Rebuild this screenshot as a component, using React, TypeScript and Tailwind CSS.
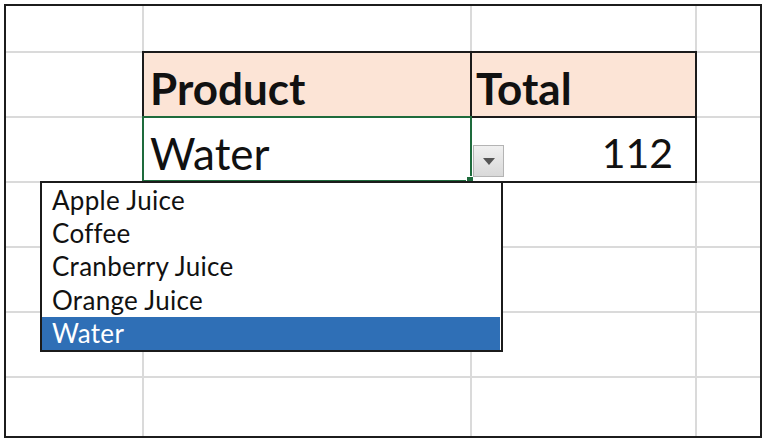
import React from 'react';

const items = ['Apple Juice', 'Coffee', 'Cranberry Juice', 'Orange Juice', 'Water'];

function GridCell({ lastCol, lastRow }: { lastCol: boolean; lastRow: boolean }) {
  return (
    <div
      className={`bg-white border-[#dadada] ${lastCol ? '' : 'border-r-2'} ${lastRow ? '' : 'border-b-2'}`}
    />
  );
}

export default function App() {
  const cells: React.ReactNode[] = [];
  for (let r = 0; r < 7; r++) {
    for (let c = 0; c < 4; c++) {
      // the table covers rows 2-3, columns 2-3
      if ((r === 1 || r === 2) && (c === 1 || c === 2)) continue;
      cells.push(<GridCell key={`${r}-${c}`} lastCol={c === 3} lastRow={r === 6} />);
    }
  }

  return (
    <div className="w-[768px] h-[445px] bg-white p-[4px] font-['Lato',sans-serif] text-[#111]">
      <div className="w-[758px] h-[434px] border-2 border-[#1c1c1c] grid grid-cols-[138px_328px_225px_63px] grid-rows-[47px_65px_65px_65px_65px_65px_58px]">
        {cells}

        <div className="col-start-2 col-span-2 row-start-2 row-span-2 -ml-[2px] -mt-[2px] border-2 border-[#1b1b1b] grid grid-cols-[328px_223px] grid-rows-[65px_63px]">
          <div className="bg-[#fce4d6] border-r-2 border-b-2 border-[#1b1b1b] flex items-center pl-[6px] pt-[6px] text-[44px] font-bold leading-none">
            Product
          </div>
          <div className="bg-[#fce4d6] border-b-2 border-[#1b1b1b] flex items-center pl-[4px] pt-[6px] text-[44px] font-bold leading-none">
            Total
          </div>

          <div className="relative border-r-2 border-[#1b1b1b] bg-white flex items-center pl-[6px] pt-[6px] text-[44px] leading-none">
            Water
            <div className="absolute -left-[2px] -top-[2px] -right-[2px] -bottom-[1px] border-2 border-[#1e6b3c] pointer-events-none" />
            <div className="absolute left-[322px] top-[58px] w-[8px] h-[8px] bg-[#1e6b3c] border border-white" />

            <div className="absolute left-[329px] top-[27px] w-[31px] h-[32px] border border-[#b4b4b4] bg-gradient-to-b from-[#f0f0f0] to-[#d9d9d9] flex items-center justify-center">
              <svg width="12" height="7" viewBox="0 0 12 7">
                <path d="M0 0 L12 0 L6 7 Z" fill="#555" />
              </svg>
            </div>

            <div className="absolute z-10 -left-[104px] top-[63px] w-[463px] h-[171px] bg-white border-2 border-[#1b1b1b] flex flex-col text-[26px] tracking-[0.3px] leading-none font-normal">
              {items.map((it) => (
                <div
                  key={it}
                  className={`h-[33.4px] flex items-center pl-[10px] ${
                    it === 'Water' ? 'bg-[#2f6fb6] text-white mr-[1px]' : 'text-[#111]'
                  }`}
                >
                  {it}
                </div>
              ))}
            </div>
          </div>
          <div className="bg-white flex items-center justify-end pr-[22px] pt-[6px] text-[41px] leading-none">
            112
          </div>
        </div>
      </div>
    </div>
  );
}
